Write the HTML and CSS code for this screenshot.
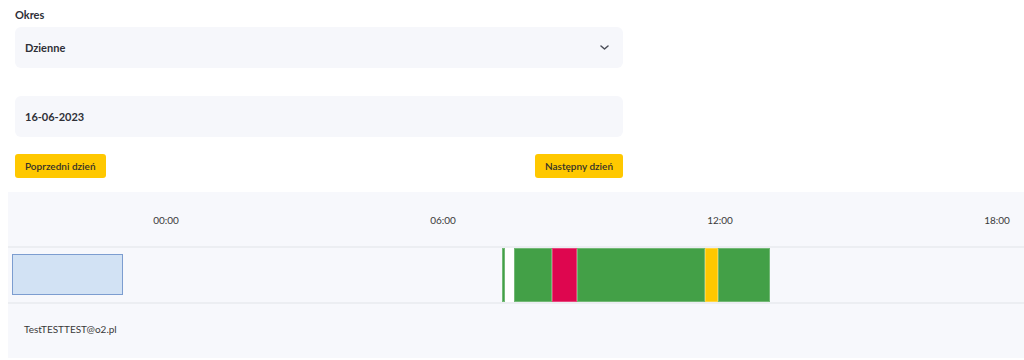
FILE: index.html
```html
<!DOCTYPE html>
<html>
<head>
    <link rel="stylesheet" href="styles.css">
</head>
<body>
    <div class="filters">
        <label class="field-label" for="okres">Okres</label>
        <div class="select-box" id="okres">
            <span>Dzienne</span>
            <svg class="chevron" width="9" height="5" viewBox="0 0 9 5">
                <path d="M1 1l3.5 3 3.5-3" fill="none" stroke="#4a4d57" stroke-width="1.5" stroke-linecap="round" stroke-linejoin="round"/>
            </svg>
        </div>

        <div class="date-box">16-06-2023</div>

        <div class="day-buttons">
            <button class="day-btn">Poprzedni dzień</button>
            <button class="day-btn">Następny dzień</button>
        </div>
    </div>

    <!-- timeline -->
    <div class="timeline">
        <div class="axis">
            <span class="tick" style="left: 158px;">00:00</span>
            <span class="tick" style="left: 435px;">06:00</span>
            <span class="tick" style="left: 712px;">12:00</span>
            <span class="tick" style="left: 989px;">18:00</span>
        </div>
        <div class="track">
            <div class="selection"></div>
            <div class="item green" style="left: 494px; width: 3px;"></div>
            <div class="item blank" style="left: 497px; width: 9px;"></div>
            <div class="item green" style="left: 506px; width: 38px;"></div>
            <div class="item red" style="left: 544px; width: 25px;"></div>
            <div class="item green" style="left: 569px; width: 128px;"></div>
            <div class="item yellow" style="left: 697px; width: 13px;"></div>
            <div class="item green" style="left: 710px; width: 52px;"></div>
        </div>
        <div class="user-row">TestTESTTEST@o2.pl</div>
    </div>
</body>
</html>
```

FILE: styles.css
```css
body {
    font-family: Lato, "Liberation Sans", sans-serif;
    margin: 0;
    background-color: #fff;
    color: #2f3037;
    overflow: hidden;
}
.filters {
    width: 608px;
    padding: 8px 0 0 15px;
    display: flex;
    flex-direction: column;
}
.field-label {
    font-size: 11px;
    font-weight: bold;
    line-height: 13px;
    margin-bottom: 6px;
}
.select-box, .date-box {
    height: 41px;
    background-color: #f6f7fb;
    border-radius: 6px;
    padding: 0 10px;
    display: flex;
    align-items: center;
    font-size: 11px;
    font-weight: bold;
    box-sizing: border-box;
}
.select-box {
    justify-content: space-between;
    padding-right: 14px;
}
.date-box {
    margin-top: 28px;
}
.day-buttons {
    display: flex;
    justify-content: space-between;
    margin-top: 17px;
}
.day-btn {
    font-family: Lato, "Liberation Sans", sans-serif;
    font-size: 10px;
    font-weight: 600;
    color: #33312a;
    background-color: #ffc800;
    border: none;
    border-radius: 3px;
    height: 24px;
    padding: 0 10px;
}
.timeline {
    margin: 14px 0 0 8px;
    background-color: #f7f8fc;
    position: relative;
    overflow: hidden;
}
.axis {
    position: relative;
    height: 54px;
    border-bottom: 2px solid #eceef2;
}
.tick {
    position: absolute;
    top: 22px;
    transform: translateX(-50%);
    font-size: 10px;
    color: #3a3a3a;
}
.track {
    position: relative;
    height: 54px;
    border-bottom: 2px solid #eceef2;
}
.selection {
    position: absolute;
    left: 4px;
    top: 6px;
    width: 111px;
    height: 41px;
    box-sizing: border-box;
    background-color: #d2e2f4;
    border: 1px solid #7c9dd0;
}
.item {
    position: absolute;
    top: 0;
    height: 100%;
    box-sizing: border-box;
    border: 1px solid rgba(255, 255, 255, 0.25);
}
.green { background-color: #43a047; }
.red { background-color: #de064f; }
.yellow { background-color: #ffc800; }
.blank { background-color: #fff; border: none; }
.user-row {
    height: 54px;
    display: flex;
    align-items: center;
    padding: 0 0 4px 16px;
    box-sizing: border-box;
    font-size: 10px;
    color: #3a3a3a;
}
```
